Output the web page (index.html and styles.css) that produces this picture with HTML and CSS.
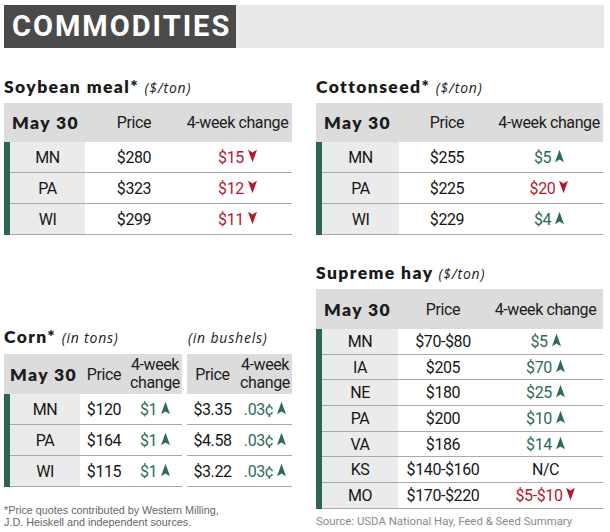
FILE: index.html
```html
<!DOCTYPE html>
<html>
<head>
<meta charset="utf-8">
<link rel="stylesheet" href="styles.css">
</head>
<body>
<div class="page">
  <div class="banner"><div class="banner-title">COMMODITIES</div></div>
  <div class="cols">
    <div class="col col-left">
      <section class="block">
        <h2 class="title">Soybean meal* <span class="unit">($/ton)</span></h2>
        <div class="tbl soy">
          <div class="thead"><div class="date">May 30</div><div>Price</div><div>4-week change</div></div>
          <div class="tbody">
            <div class="tr"><div class="st">MN</div><div>$280</div><div class="dn">$15<svg class="ar" viewBox="0 0 10 14"><path d="M0 0 L5 3 L10 0 L5 14 Z"/></svg></div></div>
            <div class="tr"><div class="st">PA</div><div>$323</div><div class="dn">$12<svg class="ar" viewBox="0 0 10 14"><path d="M0 0 L5 3 L10 0 L5 14 Z"/></svg></div></div>
            <div class="tr"><div class="st">WI</div><div>$299</div><div class="dn">$11<svg class="ar" viewBox="0 0 10 14"><path d="M0 0 L5 3 L10 0 L5 14 Z"/></svg></div></div>
          </div>
        </div>
      </section>

      <section class="block corn-block">
        <div class="corn-titles">
          <h2 class="title corn-title">Corn* <span class="unit">(in tons)</span></h2>
          <div class="unit bushels">(in bushels)</div>
        </div>
        <div class="corn-tables">
          <div class="tbl corn-l">
            <div class="thead"><div class="date">May 30</div><div>Price</div><div class="two">4-week<br>change</div></div>
            <div class="tbody">
              <div class="tr"><div class="st">MN</div><div>$120</div><div class="up">$1<svg class="ar" viewBox="0 0 10 14"><path d="M5 0 L10 14 L5 11 L0 14 Z"/></svg></div></div>
              <div class="tr"><div class="st">PA</div><div>$164</div><div class="up">$1<svg class="ar" viewBox="0 0 10 14"><path d="M5 0 L10 14 L5 11 L0 14 Z"/></svg></div></div>
              <div class="tr"><div class="st">WI</div><div>$115</div><div class="up">$1<svg class="ar" viewBox="0 0 10 14"><path d="M5 0 L10 14 L5 11 L0 14 Z"/></svg></div></div>
            </div>
          </div>
          <div class="tbl corn-r">
            <div class="thead"><div>Price</div><div class="two">4-week<br>change</div></div>
            <div class="tbody">
              <div class="tr"><div>$3.35</div><div class="up">.03¢<svg class="ar" viewBox="0 0 10 14"><path d="M5 0 L10 14 L5 11 L0 14 Z"/></svg></div></div>
              <div class="tr"><div>$4.58</div><div class="up">.03¢<svg class="ar" viewBox="0 0 10 14"><path d="M5 0 L10 14 L5 11 L0 14 Z"/></svg></div></div>
              <div class="tr"><div>$3.22</div><div class="up">.03¢<svg class="ar" viewBox="0 0 10 14"><path d="M5 0 L10 14 L5 11 L0 14 Z"/></svg></div></div>
            </div>
          </div>
        </div>
        <p class="note">*Price quotes contributed by Western Milling,<br>J.D. Heiskell and independent sources.</p>
      </section>
    </div>

    <div class="col col-right">
      <section class="block">
        <h2 class="title">Cottonseed* <span class="unit">($/ton)</span></h2>
        <div class="tbl cot">
          <div class="thead"><div class="date">May 30</div><div>Price</div><div>4-week change</div></div>
          <div class="tbody">
            <div class="tr"><div class="st">MN</div><div>$255</div><div class="up">$5<svg class="ar" viewBox="0 0 10 14"><path d="M5 0 L10 14 L5 11 L0 14 Z"/></svg></div></div>
            <div class="tr"><div class="st">PA</div><div>$225</div><div class="dn">$20<svg class="ar" viewBox="0 0 10 14"><path d="M0 0 L5 3 L10 0 L5 14 Z"/></svg></div></div>
            <div class="tr"><div class="st">WI</div><div>$229</div><div class="up">$4<svg class="ar" viewBox="0 0 10 14"><path d="M5 0 L10 14 L5 11 L0 14 Z"/></svg></div></div>
          </div>
        </div>
      </section>

      <section class="block hay-block">
        <h2 class="title">Supreme hay <span class="unit">($/ton)</span></h2>
        <div class="tbl hay">
          <div class="thead"><div class="date">May 30</div><div>Price</div><div>4-week change</div></div>
          <div class="tbody">
            <div class="tr"><div class="st">MN</div><div>$70-$80</div><div class="up">$5<svg class="ar" viewBox="0 0 10 14"><path d="M5 0 L10 14 L5 11 L0 14 Z"/></svg></div></div>
            <div class="tr"><div class="st">IA</div><div>$205</div><div class="up">$70<svg class="ar" viewBox="0 0 10 14"><path d="M5 0 L10 14 L5 11 L0 14 Z"/></svg></div></div>
            <div class="tr"><div class="st">NE</div><div>$180</div><div class="up">$25<svg class="ar" viewBox="0 0 10 14"><path d="M5 0 L10 14 L5 11 L0 14 Z"/></svg></div></div>
            <div class="tr"><div class="st">PA</div><div>$200</div><div class="up">$10<svg class="ar" viewBox="0 0 10 14"><path d="M5 0 L10 14 L5 11 L0 14 Z"/></svg></div></div>
            <div class="tr"><div class="st">VA</div><div>$186</div><div class="up">$14<svg class="ar" viewBox="0 0 10 14"><path d="M5 0 L10 14 L5 11 L0 14 Z"/></svg></div></div>
            <div class="tr"><div class="st">KS</div><div>$140-$160</div><div class="nc">N/C</div></div>
            <div class="tr"><div class="st">MO</div><div>$170-$220</div><div class="dn">$5-$10<svg class="ar" viewBox="0 0 10 14"><path d="M0 0 L5 3 L10 0 L5 14 Z"/></svg></div></div>
          </div>
        </div>
        <p class="source">Source: USDA National Hay, Feed &amp; Seed Summary</p>
      </section>
    </div>
  </div>
</div>
</body>
</html>
```

FILE: styles.css
```css
* { box-sizing: border-box; }
html, body { margin: 0; padding: 0; background: #fff; }
body { font-family: "Liberation Sans", Arial, sans-serif; color: #1c1c1c; }

.page { padding: 5px 6px 0 4px; width: 610px; }

.banner { height: 43px; background: #e8e8e8; display: flex; }
.banner-title {
  width: 232px; background: #4a4a4a; color: #fff;
  font-family: Roboto, "Liberation Sans", sans-serif; font-weight: 700;
  font-size: 29px; letter-spacing: 2px; line-height: 43px; padding-left: 8px;
}

.cols { display: grid; grid-template-columns: 288px 287px; column-gap: 24px; }
.col { display: flex; flex-direction: column; }

.title {
  margin: 0; font-family: Lato, "Open Sans", sans-serif; font-weight: 800;
  font-size: 17.5px; letter-spacing: 1.4px; line-height: 22px; color: #1a1a1a;
}
.unit {
  font-family: "Open Sans", sans-serif; font-weight: 400; font-style: italic;
  font-size: 14px; letter-spacing: 0.8px;
}

.block { margin-top: 28px; }
.block .title { margin-bottom: 4px; }

.tbl { font-family: Roboto, "Liberation Sans", sans-serif; font-size: 16px; letter-spacing: -0.4px; color: #161616; }
.thead {
  display: grid; background: #dcdcdc; height: 39px; align-items: center; text-align: center; color: #1c1c1c;
}
.thead .date {
  text-align: left; padding-left: 8px; font-family: Lato, sans-serif; font-weight: 800;
  font-size: 17.5px; letter-spacing: 1.4px;
}
.tbody { border-left: 6px solid #2c6651; }
.tr {
  display: grid; height: 31px; align-items: center; text-align: center;
  border-bottom: 1px solid #a9a9a9;
}
.tr > div { height: 100%; display: flex; align-items: center; justify-content: center; }
.tr .st { background: #ebebeb; }

.up { color: #2e6b56; }
.dn { color: #b3192d; }
.ar { width: 9px; height: 14px; margin-left: 4px; fill: currentColor; margin-top: -3px; }

.soy .thead { grid-template-columns: 81px 98px 1fr; }
.soy .tr { grid-template-columns: 75px 98px 1fr; }

.cot .thead { grid-template-columns: 83px 96px 1fr; }
.cot .tr { grid-template-columns: 77px 96px 1fr; }

.hay-block { margin-top: 27px; }
.hay .thead { grid-template-columns: 82px 90px 1fr; height: 40px; }
.hay .tr { grid-template-columns: 76px 90px 1fr; height: 25.7px; }

.corn-block { margin-top: 91px; }
.corn-titles { display: flex; align-items: baseline; margin-bottom: 6px; height: 22px; }
.corn-title { width: 184px; margin-bottom: 0 !important; }
.bushels { line-height: 22px; }
.corn-tables { display: flex; gap: 5px; }
.corn-l { width: 178px; }
.corn-r { width: 105px; }
.corn-l .thead { grid-template-columns: 76px 48px 1fr; height: 40px; }
.corn-l .thead .date { padding-left: 6px; }
.corn-l .tr { grid-template-columns: 70px 48px 1fr; }
.corn-r .thead { grid-template-columns: 51px 1fr; height: 40px; }
.corn-r .tbody { border-left: 0; }
.corn-r .tr { grid-template-columns: 51px 1fr; }
.two { line-height: 18px; }

.note {
  margin: 17px 0 0; font-size: 10.8px; line-height: 12px; color: #666;
  font-family: "Liberation Sans", Arial, sans-serif;
}
.source {
  margin: 5px 0 0; font-size: 11.4px; line-height: 14px; color: #8a8a8a;
  font-family: Roboto, "Liberation Sans", sans-serif;
}
```
